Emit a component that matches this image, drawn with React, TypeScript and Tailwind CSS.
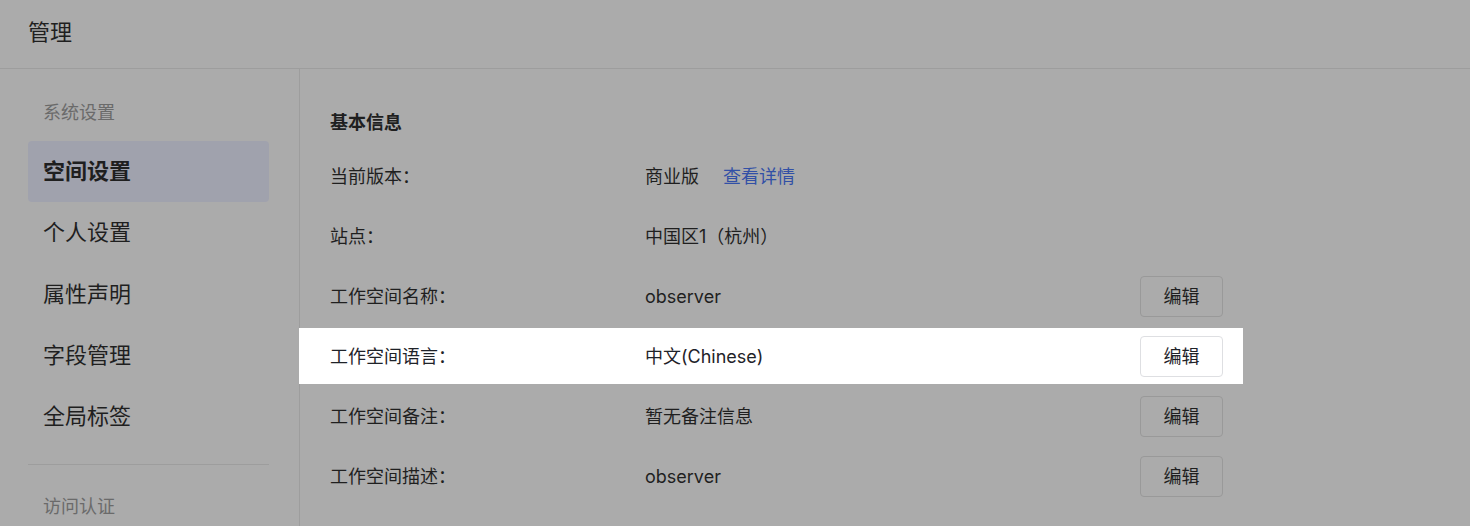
import React from "react";

const font = { fontFamily: '"Inter", "Noto Sans CJK SC", sans-serif' };

const menu = ["空间设置", "个人设置", "属性声明", "字段管理", "全局标签"];

type Row = { label: string; value: React.ReactNode; edit?: boolean; highlight?: boolean };

const rows: Row[] = [
  {
    label: "当前版本：",
    value: (
      <span className="flex items-center gap-[24px]">
        <span>商业版</span>
        <span className="text-[#3250a6]">查看详情</span>
      </span>
    ),
  },
  { label: "站点：", value: "中国区1（杭州）" },
  { label: "工作空间名称：", value: "observer", edit: true },
  { label: "工作空间语言：", value: "中文(Chinese)", edit: true, highlight: true },
  { label: "工作空间备注：", value: "暂无备注信息", edit: true },
  { label: "工作空间描述：", value: "observer", edit: true },
];

export default function App() {
  return (
    <div
      className="h-[526px] w-[1470px] overflow-hidden bg-[#ababab] text-[#1f1f1f] flex flex-col"
      style={font}
    >
      <header className="h-[69px] shrink-0 border-b border-[#9d9d9d] flex items-center px-[28px] pb-[5px]">
        <span className="text-[22px] leading-[30px]">管理</span>
      </header>
      <div className="flex flex-1 min-h-0">
        <aside className="w-[300px] shrink-0 border-r border-[#9d9d9d] pl-[28px] pr-[30px] pt-[32px]">
          <div className="pl-[15px] text-[18px] leading-[24px] text-[#6a6a6a]">系统设置</div>
          <nav className="mt-[16px] flex flex-col">
            {menu.map((m, i) => (
              <div
                key={m}
                className={
                  i === 0
                    ? "h-[61.25px] rounded-[4px] bg-[#a0a2ad] pl-[15px] flex items-center text-[22px] font-bold"
                    : "h-[61.25px] rounded-[4px] pl-[15px] flex items-center text-[22px]"
                }
              >
                {m}
              </div>
            ))}
          </nav>
          <div className="mt-[17px] border-t border-[#9d9d9d]" />
          <div className="mt-[30px] pl-[15px] text-[18px] leading-[24px] text-[#6a6a6a]">访问认证</div>
        </aside>
        <main className="flex-1 pt-[42px]">
          <div className="pl-[30px] text-[18px] leading-[24px] font-bold">基本信息</div>
          <div className="mt-[13px] flex flex-col gap-[4px] w-[943px]">
            {rows.map((r) => (
              <div
                key={r.label}
                className={
                  r.highlight
                    ? "h-[56px] -ml-px pl-[31px] flex items-center pr-[20px] text-[18px] bg-white text-[#1f2329]"
                    : "h-[56px] flex items-center pl-[30px] pr-[20px] text-[18px]"
                }
              >
                <div className="w-[315px] shrink-0">{r.label}</div>
                <div className="flex-1">{r.value}</div>
                {r.edit && (
                  <button
                    className={
                      r.highlight
                        ? "w-[83px] h-[41px] rounded-[4px] border border-[#dedfe2] bg-white text-[18px] text-[#1f2329] flex items-center justify-center"
                        : "w-[83px] h-[41px] rounded-[4px] border border-[#999999] text-[18px] flex items-center justify-center"
                    }
                  >
                    编辑
                  </button>
                )}
              </div>
            ))}
          </div>
        </main>
      </div>
    </div>
  );
}
